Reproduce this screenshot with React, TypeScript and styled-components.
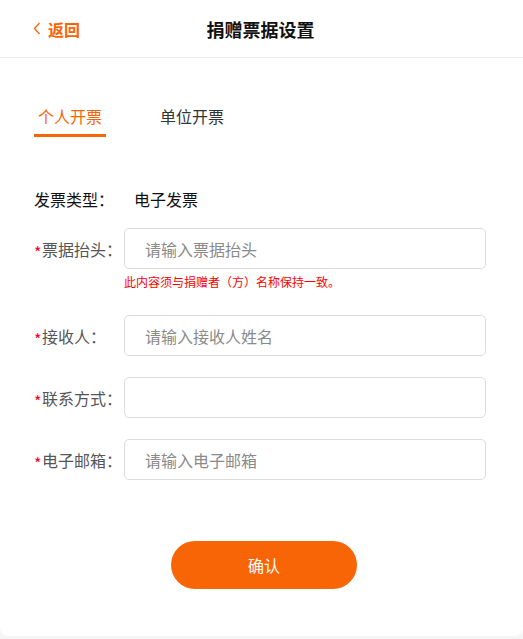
import React from "react";
import styled, { createGlobalStyle } from "styled-components";

const Global = createGlobalStyle`
  html, body { margin: 0; padding: 0; background: #f5f5f5; }
  body { font-family: "Noto Sans CJK SC", "Noto Sans", sans-serif; }
  * { box-sizing: border-box; }
`;

const ORANGE = "#f86507";

const Page = styled.div`
  width: 523px;
  height: 636px;
  background: #fff;
  border-radius: 0 0 8px 8px;
  display: flex;
  flex-direction: column;
`;

const Header = styled.header`
  height: 58px;
  border-bottom: 1px solid #ececec;
  display: flex;
  align-items: center;
  justify-content: center;
  position: relative;
`;

const Back = styled.div`
  position: absolute;
  left: 33px;
  top: 0;
  bottom: 0;
  display: flex;
  align-items: center;
  gap: 7px;
  color: ${ORANGE};
  font-size: 16px;
  font-weight: 700;
`;

const Title = styled.h1`
  margin: 0 0 0 -2px;
  font-size: 18px;
  font-weight: 700;
  color: #111;
`;

const Tabs = styled.div`
  display: flex;
  gap: 50px;
  margin: 46px 0 0 34px;
`;

const Tab = styled.div<{ $active?: boolean }>`
  width: 72px;
  text-align: center;
  font-size: 16px;
  line-height: 24px;
  padding-bottom: 6px;
  color: ${(p) => (p.$active ? ORANGE : "#333")};
  border-bottom: 3px solid ${(p) => (p.$active ? ORANGE : "transparent")};
`;

const TypeRow = styled.div`
  display: flex;
  margin: 50px 0 0 34px;
  font-size: 16px;
  line-height: 24px;
  color: #111;
`;

const TypeLabel = styled.span`
  width: 100px;
`;

const Form = styled.div`
  margin: 17px 37px 0 34px;
  display: flex;
  flex-direction: column;
  gap: 21px;
`;

const Field = styled.div`
  display: flex;
  flex-direction: column;
`;

const Row = styled.div`
  display: flex;
  align-items: center;
`;

const Label = styled.label`
  width: 90px;
  flex: none;
  font-size: 16px;
  color: #555;
  display: flex;
  align-items: center;
`;

const Star = styled.span`
  color: #f0002a;
  font-size: 16px;
  width: 8px;
  line-height: 1;
  margin-top: 7px;
`;

const Input = styled.input`
  flex: 1;
  height: 41px;
  border: 1px solid #dcdcdc;
  border-radius: 5px;
  padding: 0 20px;
  font-size: 16px;
  font-family: inherit;
  color: #333;
  outline: none;
  &::placeholder { color: #8a8a8a; }
`;

const Hint = styled.div`
  margin: 5px 0 4px 90px;
  font-size: 12px;
  line-height: 16px;
  color: #ff0000;
`;

const Submit = styled.button`
  align-self: center;
  margin: 61px 0 0 5px;
  width: 186px;
  height: 48px;
  border: none;
  border-radius: 24px;
  background: ${ORANGE};
  color: #fff;
  font-size: 16px;
  font-weight: 400;
  font-family: inherit;
`;

const fields = [
  { label: "票据抬头：", placeholder: "请输入票据抬头", hint: "此内容须与捐赠者（方）名称保持一致。" },
  { label: "接收人：", placeholder: "请输入接收人姓名" },
  { label: "联系方式：", placeholder: "" },
  { label: "电子邮箱：", placeholder: "请输入电子邮箱" },
];

export default function App() {
  return (
    <>
      <Global />
      <Page>
        <Header>
          <Back>
            <svg width="8" height="13" viewBox="0 0 8 13">
              <polyline points="6.5,1 1.5,6.5 6.5,12" fill="none" stroke={ORANGE} strokeWidth="1.3" />
            </svg>
            返回
          </Back>
          <Title>捐赠票据设置</Title>
        </Header>
        <Tabs>
          <Tab $active>个人开票</Tab>
          <Tab>单位开票</Tab>
        </Tabs>
        <TypeRow>
          <TypeLabel>发票类型：</TypeLabel>
          <span>电子发票</span>
        </TypeRow>
        <Form>
          {fields.map((f) => (
            <Field key={f.label}>
              <Row>
                <Label>
                  <Star>*</Star>
                  {f.label}
                </Label>
                <Input placeholder={f.placeholder} />
              </Row>
              {f.hint && <Hint>{f.hint}</Hint>}
            </Field>
          ))}
        </Form>
        <Submit>确认</Submit>
      </Page>
    </>
  );
}
